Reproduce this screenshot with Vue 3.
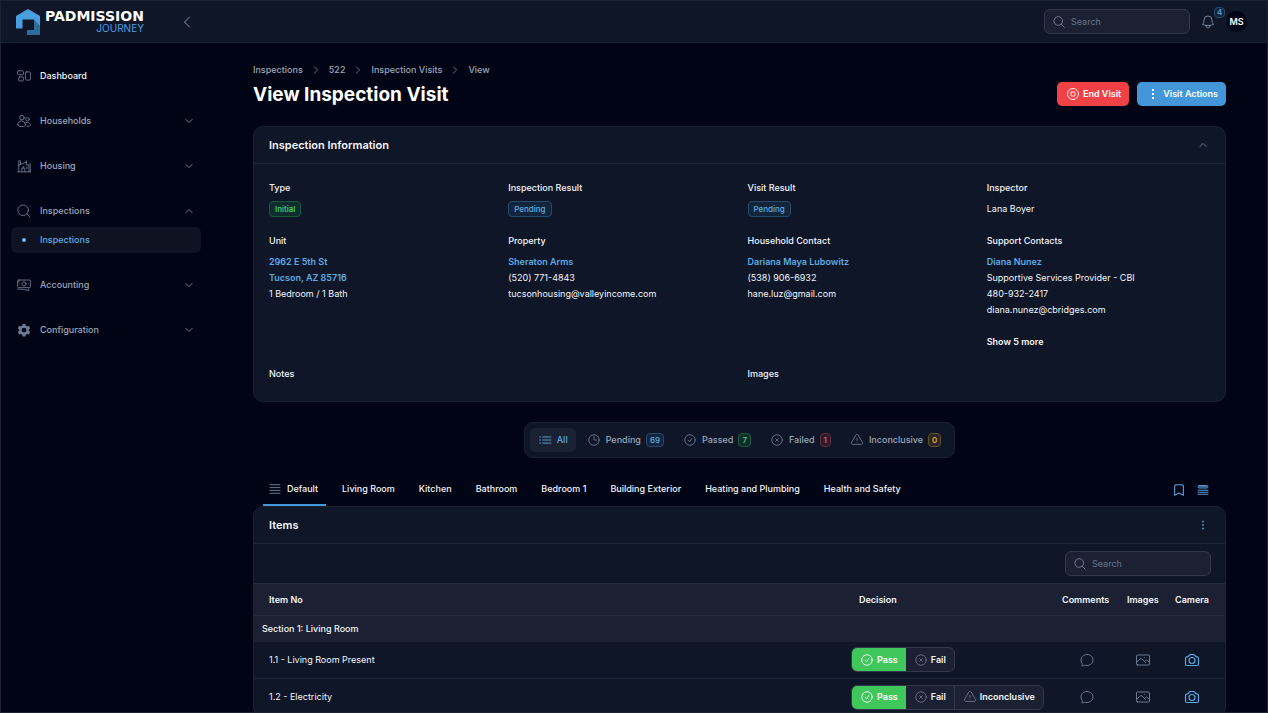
<script setup>
import { h } from 'vue'

const shapes = {
  chevronLeft: ['M15.75 19.5 8.25 12l7.5-7.5'],
  chevronRight: ['m8.25 4.5 7.5 7.5-7.5 7.5'],
  chevronDown: ['m19.5 8.25-7.5 7.5-7.5-7.5'],
  chevronUp: ['m4.5 15.75 7.5-7.5 7.5 7.5'],
  search: ['m21 21-5.2-5.2m0 0A7.5 7.5 0 1 0 5.2 5.2a7.5 7.5 0 0 0 10.6 10.6Z'],
  searchLarge: ['m22.5 22.5-5.6-5.6M19.5 10.7a9 9 0 1 1-18 0 9 9 0 0 1 18 0Z'],
  bell: ['M14.86 17.08a23.85 23.85 0 0 0 5.45-1.31A8.97 8.97 0 0 1 18 9.75V9A6 6 0 0 0 6 9v.75a8.97 8.97 0 0 1-2.31 6.02c1.73.64 3.56 1.08 5.45 1.31m5.72 0a24.26 24.26 0 0 1-5.72 0m5.72 0a3 3 0 1 1-5.72 0'],
  dashboard: ['M2.5 3h7A1.5 1.5 0 0 1 11 4.5v4A1.5 1.5 0 0 1 9.5 10h-7A1.5 1.5 0 0 1 1 8.5v-4A1.5 1.5 0 0 1 2.5 3Z', 'M4.5 13.5h5A1.5 1.5 0 0 1 11 15v4a1.5 1.5 0 0 1-1.5 1.5h-5A1.5 1.5 0 0 1 3 19v-4a1.5 1.5 0 0 1 1.5-1.5Z', 'M16 5h5.5A1.5 1.5 0 0 1 23 6.5v11a1.5 1.5 0 0 1-1.5 1.5H16a1.5 1.5 0 0 1-1.5-1.5v-11A1.5 1.5 0 0 1 16 5Z'],
  people: ['M12.5 6.2a4 4 0 1 1-8 0 4 4 0 0 1 8 0Z', 'M21 9a3 3 0 1 1-6 0 3 3 0 0 1 6 0Z', 'M1.5 18.5a6.3 6.3 0 0 1 13 0c0 2-1.5 3-6.5 3s-6.500-1-6.500-3Z', 'M14.5 15.2c3.500-2.200 8-.2 8.500 3.300.2 2-1.500 2.500-5.500 2.500'],
  housing: ['M1 22h22M3 22V3h3v6M1.5 11 16 5.5M16 3v7h4.5v12M22.500 8v14M8.500 22v-6.500h5V22M11 15.500v-2.500M17 13.500v3'],
  banknote: ['M2.5 3.5h19A1.5 1.5 0 0 1 23 5v10a1.5 1.5 0 0 1-1.5 1.5h-19A1.5 1.5 0 0 1 1 15V5a1.5 1.5 0 0 1 1.5-1.5Z', 'M15.5 10a3.5 3.5 0 1 1-7 0 3.5 3.5 0 0 1 7 0Z', 'M1 19c7 0 13 1 19 2.5v-3M4.5 10h.02M19.5 10h.02M1.5 7.5 5 4.5'],
  stop: ['M21.5 12a9.5 9.5 0 1 1-19 0 9.5 9.5 0 0 1 19 0Z', 'M9.75 8.5h4.5c.7 0 1.25.55 1.25 1.25v4.5c0 .7-.55 1.25-1.25 1.25h-4.5c-.7 0-1.25-.55-1.25-1.25v-4.5c0-.7.55-1.25 1.25-1.25Z'],
  list: ['M8.25 6.75h14M8.25 12h14M8.25 17.25h14M3 6.75h1.5M3 12h1.5M3 17.25h1.5'],
  clock: ['M12 6v6h4.5', 'M21 12a9 9 0 1 1-18 0 9 9 0 0 1 18 0Z'],
  check: ['M9 12.75 11.25 15 15 9.75', 'M21 12a9 9 0 1 1-18 0 9 9 0 0 1 18 0Z'],
  cross: ['m9.75 9.75 4.5 4.5m0-4.5-4.5 4.5', 'M21 12a9 9 0 1 1-18 0 9 9 0 0 1 18 0Z'],
  warning: ['M12 9v3.75m0 3h.008M2.7 16.13c-.87 1.5.21 3.37 1.94 3.37h14.72c1.73 0 2.81-1.87 1.94-3.37L13.95 3.38c-.87-1.5-3.03-1.5-3.9 0L2.7 16.13Z'],
  rows: ['M2 3.5h20M2 9.2h20M2 14.8h20M2 20.5h20'],
  bookmark: ['M17.6 3.32c1.1.13 1.9 1.08 1.9 2.19V21L12 17.25 4.5 21V5.51c0-1.11.8-2.06 1.9-2.19a48.5 48.5 0 0 1 11.2 0Z'],
  stack: ['M4.5 3h15a2 2 0 0 1 0 5h-15a2 2 0 0 1 0-5ZM2 12.5h20M2 16.5h20M2 20.5h20M4 5.5h16'],
  comment: ['M12 20.25c4.97 0 9-3.69 9-8.25s-4.03-8.25-9-8.25S3 7.44 3 12c0 2.1.86 4.02 1.9 5.48.3.45.2 1.04-.1 1.64l-.6 1.58c1.4.4 2.6.1 4-.8 1.1.27 2.4.35 3.8.35Z'],
  photo: ['m2.25 15.75 5.16-5.16a2.25 2.25 0 0 1 3.18 0l5.16 5.16m-1.5-1.5 1.41-1.41a2.25 2.25 0 0 1 3.18 0l2.91 2.91M3.75 19.5h16.5a1.5 1.5 0 0 0 1.5-1.5V6a1.5 1.5 0 0 0-1.5-1.5H3.75A1.5 1.5 0 0 0 2.25 6v12a1.5 1.5 0 0 0 1.5 1.5ZM14.25 8.25h.01'],
  camera: ['M6.83 6.18A2.31 2.31 0 0 1 5.19 7.23c-.38.05-.76.11-1.14.17C2.99 7.58 2.25 8.51 2.25 9.57V18a2.25 2.25 0 0 0 2.25 2.25h15A2.25 2.25 0 0 0 21.75 18V9.57c0-1.06-.75-1.99-1.8-2.17a48 48 0 0 0-1.14-.17 2.31 2.31 0 0 1-1.64-1.05l-.82-1.32a2.19 2.19 0 0 0-1.74-1.04 48.8 48.8 0 0 0-5.23 0 2.19 2.19 0 0 0-1.74 1.04l-.81 1.32Z', 'M16.5 12.75a4.5 4.5 0 1 1-9 0 4.5 4.5 0 0 1 9 0Z'],
}

const solid = {
  gear: 'M9.6 1.5h4.8l.7 3.1 2.1 1.2 3-1 2.4 4.2-2.3 2.1v2.4l2.3 2-2.4 4.2-3-.9-2.1 1.2-.7 3h-4.8l-.7-3-2.1-1.2-3 .9-2.4-4.2 2.3-2v-2.4L1.4 9l2.4-4.2 3 1 2.1-1.2.7-3.1ZM12 8a4.2 4.2 0 1 0 0 8.4A4.2 4.2 0 0 0 12 8Z',
  dots: 'M10.4 3.5h3.2v3.2h-3.2ZM10.4 10.4h3.2v3.2h-3.2ZM10.4 17.3h3.2v3.2h-3.2Z',
}

const Icon = (props) => {
  const fill = solid[props.name]
  return h(
    'svg',
    {
      viewBox: '0 0 24 24',
      'aria-hidden': 'true',
      fill: fill ? 'currentColor' : 'none',
      'fill-rule': 'evenodd',
      stroke: fill ? 'none' : 'currentColor',
      'stroke-width': props.weight || 1.5,
      'stroke-linecap': 'round',
      'stroke-linejoin': 'round',
    },
    (fill ? [fill] : shapes[props.name]).map((d) => h('path', { d })),
  )
}
Icon.props = ['name', 'weight']

const nav = [
  { label: 'Dashboard', icon: 'dashboard', current: true },
  { label: 'Households', icon: 'people', group: true },
  { label: 'Housing', icon: 'housing', group: true },
  { label: 'Inspections', icon: 'searchLarge', group: true, children: ['Inspections'] },
  { label: 'Accounting', icon: 'banknote', group: true },
  { label: 'Configuration', icon: 'gear', group: true },
]

const crumbs = ['Inspections', '522', 'Inspection Visits', 'View']

const results = [
  { label: 'Type', badge: 'Initial', tone: 'green' },
  { label: 'Inspection Result', badge: 'Pending', tone: 'blue' },
  { label: 'Visit Result', badge: 'Pending', tone: 'blue' },
  { label: 'Inspector', text: 'Lana Boyer' },
]

const contacts = [
  { label: 'Unit', links: ['2962 E 5th St', 'Tucson, AZ 85716'], lines: ['1 Bedroom / 1 Bath'] },
  { label: 'Property', links: ['Sheraton Arms'], lines: ['(520) 771-4843', 'tucsonhousing@valleyincome.com'] },
  { label: 'Household Contact', links: ['Dariana Maya Lubowitz'], lines: ['(538) 906-6932', 'hane.luz@gmail.com'] },
  {
    label: 'Support Contacts',
    links: ['Diana Nunez'],
    lines: ['Supportive Services Provider - CBI', '480-932-2417', 'diana.nunez@cbridges.com'],
    more: 'Show 5 more',
  },
]

const filters = [
  { label: 'All', icon: 'list', active: true },
  { label: 'Pending', icon: 'clock', count: 69, tone: 'blue' },
  { label: 'Passed', icon: 'check', count: 7, tone: 'green' },
  { label: 'Failed', icon: 'cross', count: 1, tone: 'red' },
  { label: 'Inconclusive', icon: 'warning', count: 0, tone: 'amber' },
]

const rooms = ['Default', 'Living Room', 'Kitchen', 'Bathroom', 'Bedroom 1', 'Building Exterior', 'Heating and Plumbing', 'Health and Safety']

const decisions = {
  Pass: 'check',
  Fail: 'cross',
  Inconclusive: 'warning',
}

const items = [
  { name: '1.1 - Living Room Present', options: ['Pass', 'Fail'] },
  { name: '1.2 - Electricity', options: ['Pass', 'Fail', 'Inconclusive'] },
]
</script>

<template>
  <div class="app">
    <header class="topbar">
      <a class="brand" href="#">
        <svg class="brand-mark" viewBox="0 0 24 26" aria-hidden="true">
          <path class="mark-main" d="M0 7 12 0 24 7V26H11v-5h7V10.5H6.500v9H0Z" />
          <path class="mark-shade" d="M18 10.5 24 17v9H11v-5h7Z" />
        </svg>
        <span class="brand-text">
          <span class="brand-name">PADMISSION</span>
          <span class="brand-sub">JOURNEY</span>
        </span>
      </a>
      <button class="plain collapse" type="button" aria-label="Collapse sidebar"><Icon name="chevronLeft" class="i16" /></button>
      <div class="top-tools">
        <label class="search">
          <Icon name="search" class="i14" />
          <input type="search" placeholder="Search" aria-label="Global search" />
        </label>
        <button class="plain bell" type="button" aria-label="Notifications">
          <Icon name="bell" class="i16" />
          <span class="badge blue bell-count">4</span>
        </button>
        <button class="avatar" type="button">MS</button>
      </div>
    </header>

    <div class="body">
      <nav class="sidebar" aria-label="Main">
        <div v-for="item in nav" :key="item.label" class="nav-group">
          <component :is="item.group ? 'button' : 'a'" class="nav-item" :class="{ current: item.current }" :href="item.group ? null : '#'" :type="item.group ? 'button' : null">
            <Icon :name="item.icon" class="i14" />
            <span class="nav-label">{{ item.label }}</span>
            <Icon v-if="item.group" :name="item.children ? 'chevronUp' : 'chevronDown'" class="i10" weight="2.4" />
          </component>
          <a v-for="child in item.children" :key="child" class="nav-child" href="#"><span class="dot"></span>{{ child }}</a>
        </div>
      </nav>

      <main class="main">
        <div class="page-head">
          <div>
            <ol class="crumbs">
              <li v-for="(crumb, i) in crumbs" :key="crumb">
                <Icon v-if="i" name="chevronRight" class="i10" weight="2" />
                <a href="#">{{ crumb }}</a>
              </li>
            </ol>
            <h1>View Inspection Visit</h1>
          </div>
          <div class="actions">
            <button class="btn danger" type="button"><Icon name="stop" class="i14" />End Visit</button>
            <button class="btn primary" type="button"><Icon name="dots" class="i14" />Visit Actions</button>
          </div>
        </div>

        <section class="card info">
          <div class="card-head">
            <h2>Inspection Information</h2>
            <button class="plain muted" type="button" aria-label="Collapse section"><Icon name="chevronUp" class="i10" weight="2.4" /></button>
          </div>
          <div class="info-grid">
            <div v-for="r in results" :key="r.label" class="field">
              <h3>{{ r.label }}</h3>
              <p v-if="r.text">{{ r.text }}</p>
              <span v-else class="badge" :class="r.tone">{{ r.badge }}</span>
            </div>
            <div v-for="c in contacts" :key="c.label" class="field">
              <h3>{{ c.label }}</h3>
              <div>
                <a v-for="l in c.links" :key="l" class="link" href="#">{{ l }}</a>
                <p v-for="l in c.lines" :key="l">{{ l }}</p>
              </div>
              <button v-if="c.more" class="plain more" type="button">{{ c.more }}</button>
            </div>
            <h3 class="wide">Notes</h3>
            <h3 class="wide">Images</h3>
          </div>
        </section>

        <div class="filters">
          <button v-for="f in filters" :key="f.label" class="filter" :class="{ active: f.active }" type="button">
            <Icon :name="f.icon" class="i14" />{{ f.label }}
            <span v-if="f.tone" class="badge count" :class="f.tone">{{ f.count }}</span>
          </button>
        </div>

        <div class="tabs-row">
          <div class="tabs" role="tablist">
            <button v-for="(room, i) in rooms" :key="room" class="tab" :class="{ active: i === 0 }" type="button" role="tab" :aria-selected="i === 0">
              <Icon v-if="i === 0" name="rows" class="i12" weight="2" />{{ room }}
            </button>
          </div>
          <div class="tab-tools">
            <button class="plain" type="button" aria-label="Bookmark"><Icon name="bookmark" class="i14" weight="2" /></button>
            <button class="plain" type="button" aria-label="Sections"><Icon name="stack" class="i12" weight="2" /></button>
          </div>
        </div>

        <section class="card items">
          <div class="card-head">
            <h2>Items</h2>
            <button class="plain blue-text" type="button" aria-label="More actions"><Icon name="dots" class="i12" /></button>
          </div>
          <div class="table-tools">
            <label class="search">
              <Icon name="search" class="i14" />
              <input type="search" placeholder="Search" aria-label="Search items" />
            </label>
          </div>
          <table>
            <thead>
              <tr>
                <th class="c-item" scope="col">Item No</th>
                <th class="c-decision" scope="col">Decision</th>
                <th class="c-comments" scope="col">Comments</th>
                <th class="c-images" scope="col">Images</th>
                <th class="c-camera" scope="col">Camera</th>
              </tr>
            </thead>
            <tbody>
              <tr class="section">
                <th colspan="5" scope="colgroup">Section 1: Living Room</th>
              </tr>
              <tr v-for="item in items" :key="item.name" class="item">
                <td class="c-item">{{ item.name }}</td>
                <td>
                  <div class="decision" role="group" :aria-label="item.name">
                    <button v-for="(o, i) in item.options" :key="o" type="button" :class="{ chosen: i === 0 }" :aria-pressed="i === 0">
                      <Icon :name="decisions[o]" class="i14" />{{ o }}
                    </button>
                  </div>
                </td>
                <td class="act"><button class="plain muted" type="button" aria-label="Comments"><Icon name="comment" class="i16" /></button></td>
                <td class="act"><button class="plain muted" type="button" aria-label="Images"><Icon name="photo" class="i16" /></button></td>
                <td class="act"><button class="plain blue-text" type="button" aria-label="Camera"><Icon name="camera" class="i16" weight="1.8" /></button></td>
              </tr>
            </tbody>
          </table>
        </section>
      </main>
    </div>
  </div>
</template>

<style>
body {
  background: #010414;
}
</style>

<style scoped>
.app {
  box-sizing: border-box;
  display: flex;
  flex-direction: column;
  height: 100vh;
  overflow: hidden;
  border: 1px solid #1b2333;
  background: #010414;
  color: #f4f5f8;
  font: 400 9px/16px Inter, "Liberation Sans", sans-serif;
}
.app * {
  box-sizing: border-box;
}
h1,
h2,
h3,
p,
ol {
  margin: 0;
  padding: 0;
}
a {
  color: inherit;
  text-decoration: none;
}
button {
  margin: 0;
  padding: 0;
  border: 0;
  background: none;
  color: inherit;
  font: inherit;
  cursor: pointer;
}
svg {
  display: block;
  flex: none;
}
.i10 { width: 10px; height: 10px; }
.i12 { width: 12px; height: 12px; }
.i14 { width: 14px; height: 14px; }
.i16 { width: 16px; height: 16px; }
.plain {
  display: flex;
  align-items: center;
  justify-content: center;
}
.muted { color: #6b7890; }
.blue-text { color: #5aa9e0; }

.topbar {
  display: flex;
  flex: none;
  align-items: center;
  height: 42px;
  padding: 0 20px 0 15px;
  border-bottom: 1px solid #182132;
  background: #0e1628;
}
.brand {
  display: flex;
  gap: 5px;
}
.brand-mark {
  width: 24px;
  height: 26px;
}
.mark-main { fill: #479fe0; }
.mark-shade { fill: #2e6c9e; }
.brand-text {
  display: flex;
  flex-direction: column;
  align-items: flex-end;
  padding-top: 1px;
}
.brand-name {
  color: #fff;
  font-family: "DejaVu Sans", Verdana, sans-serif;
  font-size: 14px;
  font-weight: 700;
  line-height: 13px;
}
.brand-sub {
  color: #479fe0;
  font-size: 10px;
  line-height: 10px;
}
.collapse {
  margin-left: 35px;
  color: #8792a6;
}
.top-tools {
  display: flex;
  align-items: center;
  gap: 10px;
  margin-left: auto;
}
.search {
  display: flex;
  align-items: center;
  gap: 5px;
  width: 146px;
  height: 25px;
  padding: 0 7px;
  border: 1px solid #30384a;
  border-radius: 6px;
  background: #1b2133;
  color: #76839a;
}
.search input {
  flex: 1;
  min-width: 0;
  padding: 0;
  border: 0;
  outline: 0;
  background: none;
  color: #f4f5f8;
  font: inherit;
}
.search input::placeholder {
  color: #68748a;
  opacity: 1;
}
.bell {
  position: relative;
  color: #76839a;
}
.badge {
  display: inline-block;
  padding: 0 5px;
  border: 1px solid;
  border-radius: 4px;
  font-size: 8px;
  font-weight: 500;
  line-height: 14px;
}
.bell-count {
  position: absolute;
  top: -7px;
  left: 14px;
  padding: 0 2px;
  line-height: 9px;
}
.blue { border-color: #264a69; background: #12253c; color: #62ade3; }
.green { border-color: #1a5a3c; background: #0f2d2c; color: #47d67c; }
.red { border-color: #642c3c; background: #2c1c2e; color: #ef6b72; }
.amber { border-color: #665022; background: #2a2626; color: #efb929; }
.avatar {
  width: 21px;
  height: 21px;
  border-radius: 50%;
  background: #010414;
  color: #fff;
  font-weight: 600;
}

.body {
  display: flex;
  flex: 1;
  min-height: 0;
}
.sidebar {
  display: flex;
  flex: none;
  flex-direction: column;
  gap: 19px;
  width: 211px;
  padding: 20px 11px 0 10px;
}
.nav-item,
.nav-child {
  display: flex;
  align-items: center;
  width: 100%;
  height: 26px;
  padding: 0 7px 0 6px;
  color: #9ba7ba;
  font-weight: 500;
}
.nav-item {
  gap: 9px;
}
.nav-item.current {
  color: #f4f5f8;
}
.nav-item svg {
  color: #6e7b92;
}
.nav-label {
  flex: 1;
  text-align: left;
}
.nav-child {
  gap: 14px;
  margin-top: 3px;
  padding-left: 11px;
  border-radius: 6px;
  background: #0f1220;
  color: #5dabe2;
}
.dot {
  width: 4px;
  height: 4px;
  border-radius: 50%;
  background: #6cbcf3;
}

.main {
  flex: 1;
  min-width: 0;
  padding: 19px 41px 0;
}
.page-head {
  display: flex;
  align-items: flex-end;
  justify-content: space-between;
}
.crumbs {
  display: flex;
  gap: 8px;
  list-style: none;
  color: #9ba7ba;
  font-weight: 500;
}
.crumbs li {
  display: flex;
  align-items: center;
  gap: 8px;
}
.crumbs svg {
  color: #76839a;
}
h1 {
  margin-top: 4px;
  color: #fff;
  font-size: 19px;
  font-weight: 700;
  line-height: 26px;
}
.actions {
  display: flex;
  gap: 8px;
  padding-bottom: 2px;
}
.btn {
  display: flex;
  align-items: center;
  gap: 3px;
  height: 24px;
  padding: 0 8px 0 9px;
  border-radius: 5px;
  color: #fff;
  font-weight: 600;
}
.danger { background: #ef4146; }
.primary { background: #4397d8; }

.card {
  border: 1px solid #192234;
  border-radius: 10px;
  background: #0e1628;
}
.info {
  margin-top: 18px;
}
.card-head {
  display: flex;
  align-items: center;
  justify-content: space-between;
  height: 37px;
  padding: 0 16px 0 15px;
  border-bottom: 1px solid #1d2536;
}
.card-head button {
  min-width: 12px;
}
h2 {
  font-size: 11px;
  font-weight: 600;
}
h3 {
  font-size: 9px;
  font-weight: 500;
}
.info-grid {
  display: grid;
  grid-template-columns: repeat(4, minmax(0, 1fr));
  gap: 16px;
  padding: 16px 15px 19px;
}
.field {
  display: flex;
  flex-direction: column;
  align-items: flex-start;
  gap: 5px;
}
.link {
  display: block;
  color: #5dabe2;
  font-weight: 600;
}
.more {
  margin-top: 11px;
  font-weight: 600;
}
.wide {
  grid-column: span 2;
}

.filters {
  display: flex;
  gap: 3px;
  width: fit-content;
  margin: 20px auto 0;
  padding: 5px;
  border: 1px solid #192234;
  border-radius: 9px;
  background: #0e1628;
}
.filter {
  display: flex;
  align-items: center;
  gap: 5px;
  height: 24px;
  padding: 0 8px;
  border-radius: 5px;
  color: #9ba7ba;
  font-weight: 500;
}
.filter svg {
  color: #6b7890;
}
.filter.active,
.filter.active svg {
  color: #5dabe2;
}
.filter.active {
  background: #1a2133;
}
.count {
  padding: 0 3px;
  line-height: 12px;
}

.tabs-row {
  display: flex;
  align-items: center;
  justify-content: space-between;
  margin-top: 15px;
  padding: 0 17px 0 10px;
}
.tabs {
  display: flex;
  gap: 8px;
}
.tab {
  display: flex;
  align-items: center;
  gap: 6px;
  height: 33px;
  padding: 0 8px;
  border-bottom: 2px solid transparent;
  font-weight: 500;
}
.tab svg {
  color: #6b7890;
}
.tab.active {
  padding-left: 6px;
  border-color: #4397d8;
}
.tab-tools {
  display: flex;
  align-items: center;
  gap: 11px;
  color: #5599cb;
}
.items {
  overflow: hidden;
}
.table-tools {
  display: flex;
  justify-content: flex-end;
  padding: 7px 14px;
}
table {
  width: 100%;
  border-collapse: collapse;
  table-layout: fixed;
}
th,
td {
  padding: 0 8px;
  text-align: left;
}
th {
  height: 32px;
  border-top: 1px solid #252c3e;
  background: #1b2133;
  font-weight: 600;
}
.section th {
  height: 26px;
  font-weight: 500;
}
th.c-item,
td.c-item { padding-left: 15px; }
.c-decision { width: 203px; }
.c-comments { width: 65px; }
.c-images { width: 48px; }
.c-camera { width: 58px; }
.item td {
  height: 37px;
  border-bottom: 1px solid #192234;
}
.item td:nth-child(2) {
  padding: 0;
}
.act .plain {
  margin: 0 auto;
}
.item .act:last-child {
  padding: 0 16px 0 8px;
}
.decision {
  display: flex;
  width: fit-content;
  overflow: hidden;
  border: 1px solid #30384a;
  border-radius: 6px;
  background: #1b2133;
}
.decision button {
  display: flex;
  align-items: center;
  gap: 3px;
  height: 23px;
  padding: 0 8px;
  font-weight: 600;
}
.decision button + button + button {
  border-left: 1px solid #30384a;
}
.decision svg {
  color: #6b7890;
}
.decision .chosen {
  background: #3fc75c;
  color: #fff;
}
.decision .chosen svg {
  color: #fff;
}
</style>
